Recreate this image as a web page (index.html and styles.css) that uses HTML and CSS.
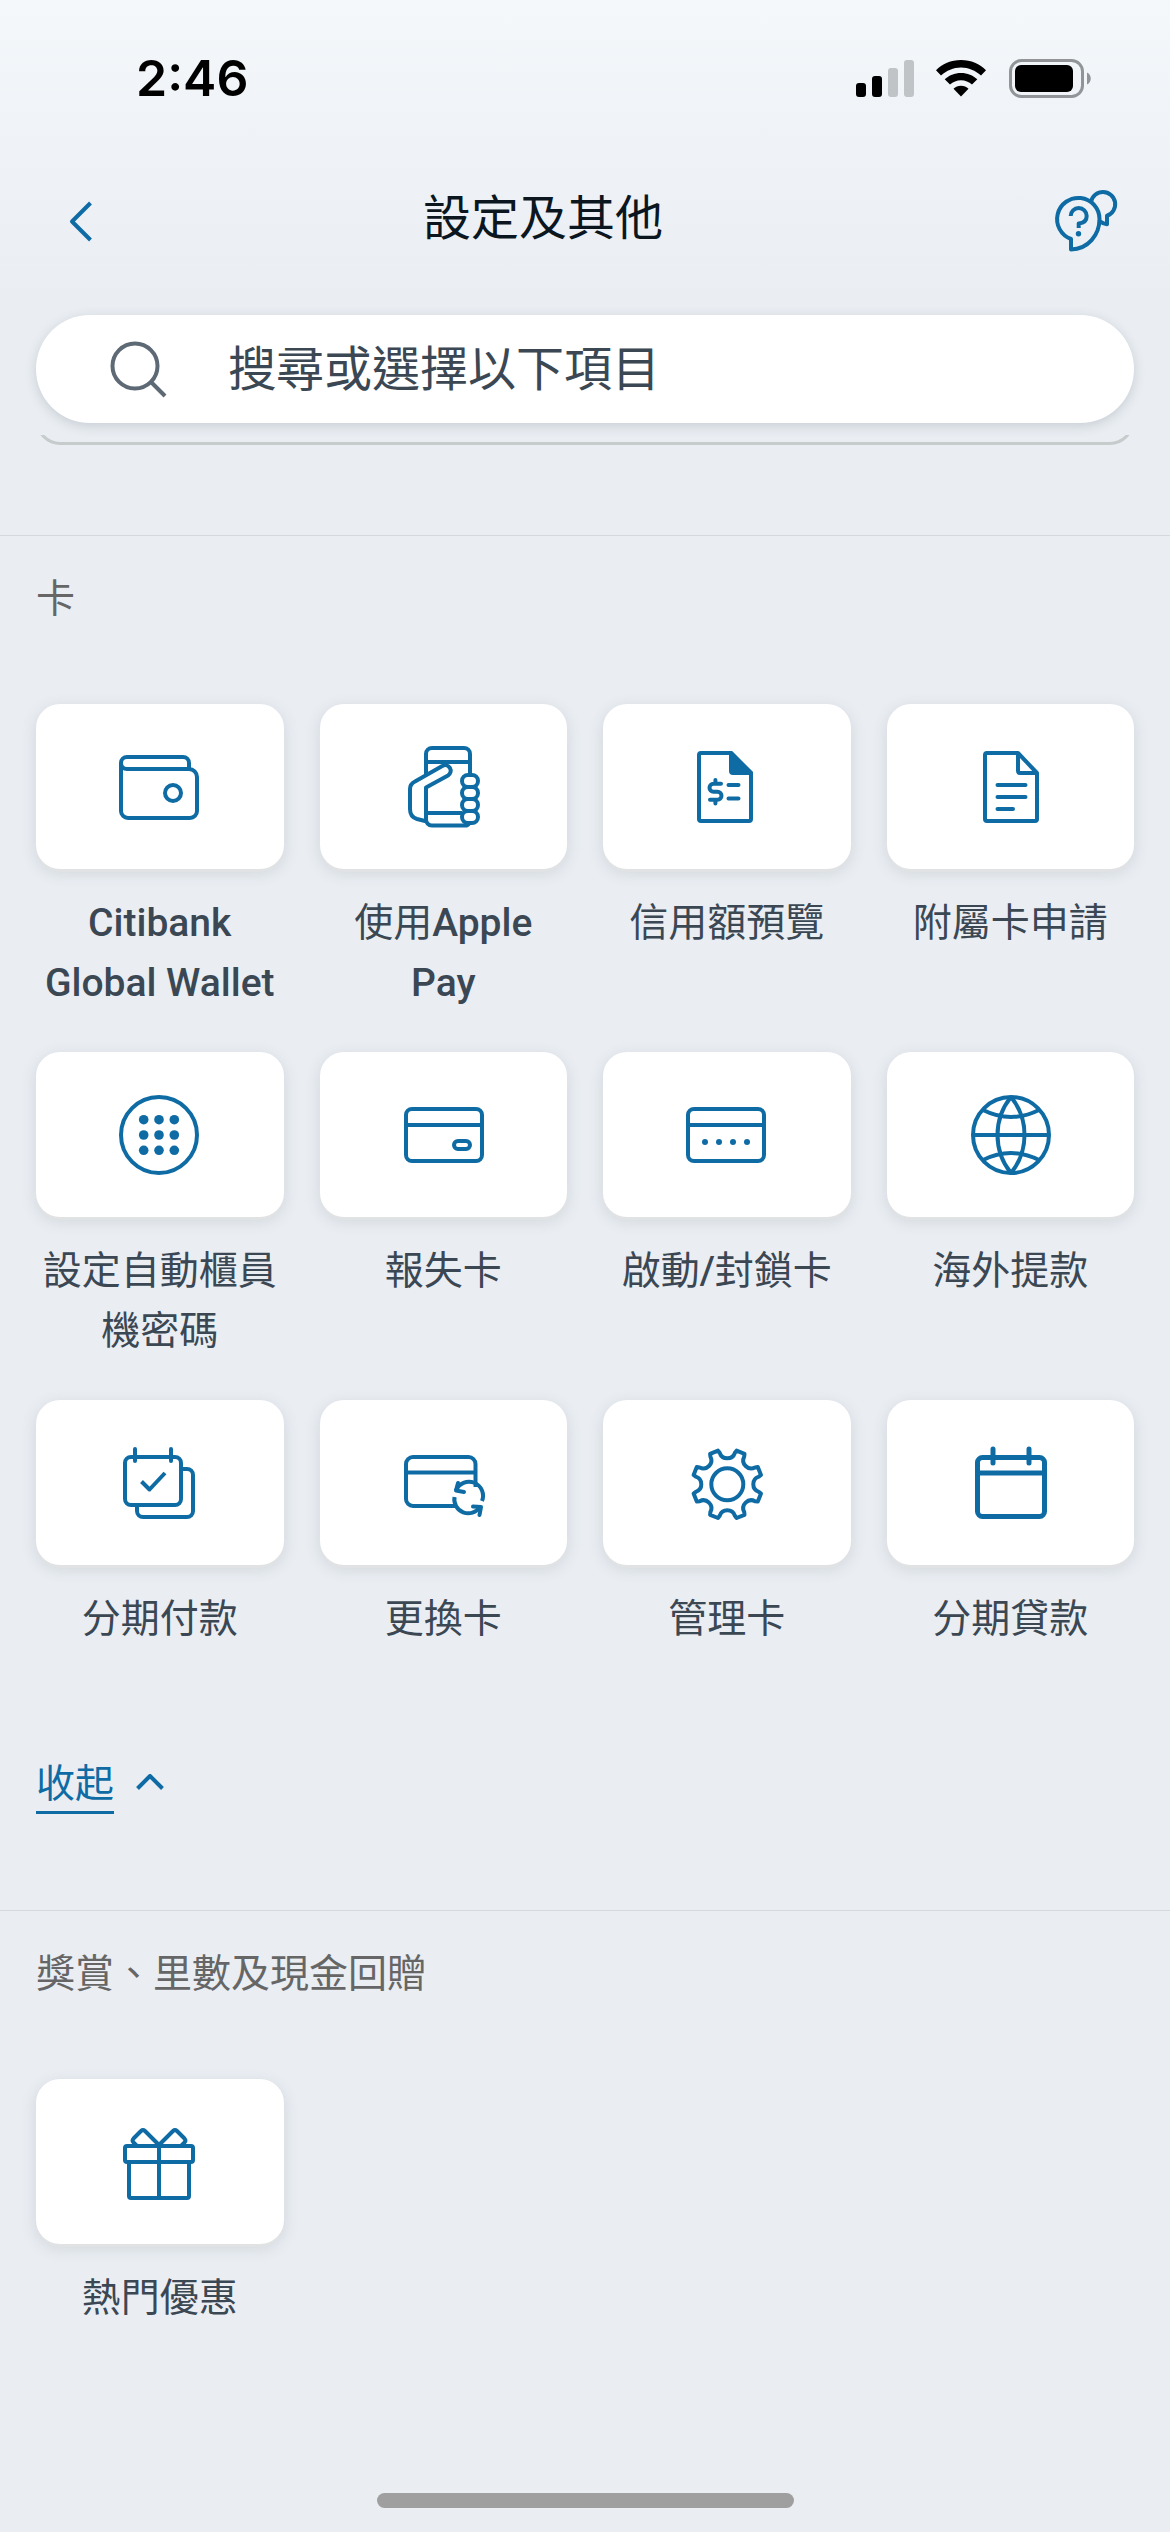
FILE: index.html
```html
<!DOCTYPE html>
<html lang="zh-Hant-HK">
<head>
<meta charset="utf-8">
<meta name="viewport" content="width=device-width, initial-scale=1">
<title>設定及其他</title>
<link rel="stylesheet" href="styles.css">
</head>
<body>
<div class="screen">
  <div class="status">
    <span class="clock">2:46</span>
    <div class="indicators">
      <svg width="58" height="40" viewBox="0 0 58 40" aria-hidden="true">
        <rect x="0" y="25" width="10" height="14" rx="3"/>
        <rect x="16" y="18" width="10" height="21" rx="3"/>
        <rect class="dim" x="32" y="10" width="10" height="29" rx="3"/>
        <rect class="dim" x="48" y="2" width="10" height="37" rx="3"/>
      </svg>
      <svg width="52" height="40" viewBox="0 0 52 40" aria-hidden="true">
        <path d="M26 2C16 2 7 6 1 12.300L6 17.500C11.500 12.500 18.500 9.500 26 9.500S40.500 12.500 46 17.500L51 12.300C45 6 36 2 26 2z"/>
        <path d="M26 15C19.500 15 14 17.300 9.700 21.300L15 26.500C18 24 21.800 22.300 26 22.300S34 24 37 26.500L42.300 21.300C38 17.300 32.500 15 26 15z"/>
        <path d="M26 27.700C23 27.700 20.500 28.800 18.500 30.700L26 38.500 33.500 30.700C31.500 28.800 29 27.700 26 27.700z"/>
      </svg>
      <svg width="84" height="40" viewBox="0 0 84 40" aria-hidden="true">
        <rect class="shell" x="2.500" y="2.500" width="72" height="36" rx="11"/>
        <rect x="7" y="7" width="58" height="27" rx="6"/>
        <path class="nub" d="M79 14.500c5 2 5 10 0 12z"/>
      </svg>
    </div>
  </div>

  <header class="topbar">
    <button class="icon-btn" type="button" aria-label="返回">
      <svg class="line" width="96" height="72" viewBox="0 0 96 72" aria-hidden="true"><path d="M54.500 18 36 36.500 54.500 55"/></svg>
    </button>
    <h1 class="title">設定及其他</h1>
    <button class="icon-btn help" type="button" aria-label="說明">
      <svg class="line" width="84" height="72" viewBox="0 0 84 72" aria-hidden="true">
        <path d="M21 54V64.500C38 64 49.500 50 49.500 34A21.200 21.200 0 1 0 21 54z"/>
        <path d="M41 17A12.200 12.200 0 1 1 57 30.700V39.300C54.500 39 52.300 38 50 36.500"/>
        <path d="M20.700 31a8 8 0 1 1 16 0c0 4.500-3 7-8 7.500V43"/>
        <circle class="dot" cx="28.500" cy="48.700" r="2.700"/>
      </svg>
    </button>
  </header>

  <form class="search" role="search">
    <label class="search-box">
      <svg class="glass" width="60" height="60" viewBox="0 0 60 60" aria-hidden="true"><circle cx="27" cy="27" r="22.500"/><path d="M43 43 57 57"/></svg>
      <input type="search" aria-label="搜尋或選擇以下項目" placeholder="搜尋或選擇以下項目">
    </label>
    <div class="search-edge"></div>
  </form>

  <main>
    <section class="group">
      <h2>卡</h2>
      <ul class="grid">
        <li><a class="item" href="#wallet"><span class="tile"><svg class="line" viewBox="0 0 96 96" aria-hidden="true"><path d="M15 30a6 6 0 0 1 0-12H71a6 6 0 0 1 6 6v6M9 24V72a7 7 0 0 0 7 7H78a7 7 0 0 0 7-7V38a8 8 0 0 0-8-8H15"/><circle cx="61" cy="54" r="8"/></svg></span><span><span class="latin">Citibank Global Wallet</span></span></a></li>
        <li><a class="item" href="#apple-pay"><span class="tile"><svg class="line" viewBox="0 0 96 96" aria-hidden="true"><path d="M31 36V15a6 6 0 0 1 6-6H69a6 6 0 0 1 6 6V36M31 23H75M31 74H67M31 80a6 6 0 0 0 6 6.500H70q3 0 4-2"/><path d="M31 83V48.500L53 36.500A5.500 5.500 0 0 0 47.300 27L20 42.500Q15 45 15 50V70Q15 78 22 80L32 82.500"/><rect x="67" y="36" width="16" height="12" rx="6"/><rect x="67" y="48" width="16" height="12" rx="6"/><rect x="67" y="60" width="16" height="12" rx="6"/><rect x="67" y="72" width="16" height="12" rx="6"/></svg></span><span>使用<span class="latin">Apple Pay</span></span></a></li>
        <li><a class="item" href="#limit"><span class="tile"><svg class="line" viewBox="0 0 96 96" aria-hidden="true"><path d="M52 14H22a2 2 0 0 0-2 2V80a2 2 0 0 0 2 2H70a2 2 0 0 0 2-2V34z"/><path class="solid" d="M52 14V32a2 2 0 0 0 2 2H72z"/><path class="round" d="M42 44.700H34.500a4 4 0 0 0 0 8H38.500a4 4 0 0 1 0 8H31M36.400 41v3.500M36.400 61v3.500M49.500 46H59.500M49.500 59.500H59.500"/></svg></span><span>信用額預覽</span></a></li>
        <li><a class="item" href="#supplementary"><span class="tile"><svg class="line" viewBox="0 0 96 96" aria-hidden="true"><path d="M56 14H25a2 2 0 0 0-2 2V80a2 2 0 0 0 2 2H73a2 2 0 0 0 2-2V34z"/><path d="M56 14V32a2 2 0 0 0 2 2H75"/><path class="round" d="M35.500 46H63.500M35.500 58H63.500M35.500 70H51"/></svg></span><span>附屬卡申請</span></a></li>
        <li><a class="item" href="#atm-pin"><span class="tile"><svg class="line" viewBox="0 0 96 96" aria-hidden="true"><circle cx="47" cy="48" r="38"/><g class="dot"><circle cx="31.700" cy="32.700" r="4.800"/><circle cx="47" cy="32.700" r="4.800"/><circle cx="62.300" cy="32.700" r="4.800"/><circle cx="31.700" cy="48" r="4.800"/><circle cx="47" cy="48" r="4.800"/><circle cx="62.300" cy="48" r="4.800"/><circle cx="31.700" cy="63.300" r="4.800"/><circle cx="47" cy="63.300" r="4.800"/><circle cx="62.300" cy="63.300" r="4.800"/></g></svg></span><span>設定自動櫃員機密碼</span></a></li>
        <li><a class="item" href="#lost-card"><span class="tile"><svg class="line" viewBox="0 0 96 96" aria-hidden="true"><rect x="11" y="22" width="76" height="52" rx="6"/><path d="M11 38H87"/><rect x="59" y="54" width="16" height="8" rx="4"/></svg></span><span>報失卡</span></a></li>
        <li><a class="item" href="#lock-card"><span class="tile"><svg class="line" viewBox="0 0 96 96" aria-hidden="true"><rect x="9" y="22" width="76" height="52" rx="6"/><path d="M9 38H85"/><g class="dot"><circle cx="26" cy="55" r="3"/><circle cx="40" cy="55" r="3"/><circle cx="54" cy="55" r="3"/><circle cx="68" cy="55" r="3"/></g></svg></span><span>啟動<span class="latin">/</span>封鎖卡</span></a></li>
        <li><a class="item" href="#overseas"><span class="tile"><svg class="line" viewBox="0 0 96 96" aria-hidden="true"><circle cx="49" cy="48" r="38"/><path d="M11 48H87M49 10C31 32 31 64 49 86C67 64 67 32 49 10M21 23Q49 37 77 23M21 73Q49 59 77 73"/></svg></span><span>海外提款</span></a></li>
        <li><a class="item" href="#instalment"><span class="tile"><svg class="line" viewBox="0 0 96 96" aria-hidden="true"><rect x="13" y="22" width="56" height="48" rx="6"/><path d="M69 34h6a6 6 0 0 1 6 6V76a6 6 0 0 1-6 6H31a6 6 0 0 1-6-6V70"/><path d="M29.500 46.500 37.500 54.500 53 38"/><path class="round" d="M23 14V26M59 14V26"/></svg></span><span>分期付款</span></a></li>
        <li><a class="item" href="#replace"><span class="tile"><svg class="line" viewBox="0 0 96 96" aria-hidden="true"><path d="M80.500 52V29a7 7 0 0 0-7-7H18a7 7 0 0 0-7 7V64a7 7 0 0 0 7 7H61M11 37.500H80"/><path d="M61 55.500A14 14 0 0 1 87 66M59.500 62A14 14 0 0 0 85 72"/><path class="round" d="M63 48 61 55.500 69 57M78 71.500 86 72 84.500 80"/></svg></span><span>更換卡</span></a></li>
        <li><a class="item" href="#manage"><span class="tile"><svg class="line" viewBox="0 0 96 96" aria-hidden="true"><circle cx="48.300" cy="49.300" r="16"/><path transform="translate(48.300 49.300)" d="M-7.600-31.500A8 8 0 0 0 7.600-31.500L9.300-33.700 17.200-30.500 16.900-27.700A8 8 0 0 0 27.700-16.900L30.500-17.200 33.700-9.300 31.500-7.600A8 8 0 0 0 31.500 7.600L33.700 9.300 30.500 17.200 27.700 16.900A8 8 0 0 0 16.900 27.700L17.200 30.500 9.300 33.700 7.600 31.500A8 8 0 0 0-7.600 31.500L-9.300 33.700-17.200 30.500-16.900 27.700A8 8 0 0 0-27.700 16.900L-30.500 17.200-33.700 9.300-31.500 7.600A8 8 0 0 0-31.500-7.600L-33.700-9.300-30.500-17.200-27.700-16.900A8 8 0 0 0-16.900-27.700L-17.200-30.500-9.300-33.700Z"/></svg></span><span>管理卡</span></a></li>
        <li><a class="item" href="#loan"><span class="tile"><svg class="line bold" viewBox="0 0 96 96" aria-hidden="true"><rect x="15.500" y="22.500" width="67" height="59" rx="5"/><path d="M15 38H83"/><path class="round" d="M31 14V28M67 14V28"/></svg></span><span>分期貸款</span></a></li>
      </ul>
      <button class="fold" type="button" aria-expanded="true">
        <span>收起</span>
        <svg class="line" width="32" height="24" viewBox="0 0 32 24" aria-hidden="true"><path d="M3.500 14.500 16 2 28.500 14.500"/></svg>
      </button>
    </section>

    <section class="group">
      <h2>獎賞、里數及現金回贈</h2>
      <ul class="grid">
        <li><a class="item" href="#offers"><span class="tile"><svg class="line" viewBox="0 0 96 96" aria-hidden="true"><rect x="13" y="32" width="68" height="16" rx="2"/><path d="M17 48V82a2 2 0 0 0 2 2H75a2 2 0 0 0 2-2V48M47 32V84M47 31 33 17a3 3 0 0 0-4 0L21.500 24.500a3 3 0 0 0 0 4L25 32M47 31 61 17a3 3 0 0 1 4 0L72.500 24.500a3 3 0 0 1 0 4L69 32"/></svg></span><span>熱門優惠</span></a></li>
      </ul>
    </section>
  </main>

  <div class="home"></div>
</div>
</body>
</html>
```
FILE: styles.css
```css
* {
  box-sizing: border-box;
}

body {
  margin: 0;
  background: #eaeef3;
  color: #3b4854;
  font-family: Roboto, "Noto Sans CJK TC", sans-serif;
  font-size: 39px;
  line-height: 60px;
}

.screen {
  display: flex;
  flex-direction: column;
  min-height: 100vh;
  background: linear-gradient(#f4f8fb, #eaeef3 300px);
}

button {
  padding: 0;
  border: 0;
  background: none;
  color: inherit;
  font: inherit;
  cursor: pointer;
}

svg {
  display: block;
}

.line {
  fill: none;
  stroke: #0f6ba4;
  stroke-width: 4;
  stroke-linejoin: round;
}

.bold {
  stroke-width: 5;
}

.round {
  stroke-linecap: round;
}

.dot {
  fill: #0f6ba4;
  stroke: none;
}

.solid {
  fill: #0f6ba4;
}

/* Status bar */
.status {
  display: flex;
  align-items: center;
  justify-content: space-between;
  height: 156px;
  padding: 0 78px 0 136px;
  color: #000;
}

.clock {
  font-family: Inter, sans-serif;
  font-size: 50px;
  font-weight: 600;
}

.indicators {
  display: flex;
  gap: 21px;
}

.dim {
  fill: #c0c4c7;
}

.shell {
  fill: none;
  stroke: #929497;
  stroke-width: 3;
}

.nub {
  fill: #929497;
}

/* Title bar */
.topbar {
  display: grid;
  grid-template-columns: 96px 1fr 180px;
  align-items: center;
  height: 129px;
  padding: 0 36px;
}

.help {
  justify-self: end;
}

.title {
  margin: 0;
  padding-bottom: 4px;
  color: #0b161e;
  font-size: 48px;
  font-weight: 400;
  text-align: center;
}

/* Search */
.search {
  padding: 30px 36px 0;
}

.search-box {
  display: flex;
  align-items: center;
  gap: 60px;
  height: 108px;
  padding: 0 72px;
  border-radius: 54px;
  background: #fff;
  box-shadow: 0 3px 12px rgba(60, 75, 85, 0.2);
}

.glass {
  flex: none;
  fill: none;
  stroke: #5d6975;
  stroke-width: 4;
}

.search-box input {
  flex: 1;
  min-width: 0;
  height: 72px;
  padding: 0;
  border: 0;
  outline: 0;
  background: none;
  color: #3b4854;
  font: inherit;
  font-size: 48px;
}

.search-box input::placeholder {
  color: #3b4854;
  opacity: 1;
}

.search-edge {
  display: flex;
  align-items: flex-end;
  height: 10px;
  margin-top: 12px;
  overflow: hidden;
}

.search-edge::before {
  content: "";
  flex: 1;
  height: 60px;
  border: 3px solid #c6cbcb;
  border-radius: 24px;
}

/* Groups */
main {
  flex: 1;
  padding-top: 90px;
}

.group {
  padding: 33px 36px 96px;
  border-top: 1px solid #d5d9de;
}

.group h2 {
  margin: 0 0 75px;
  color: #666;
  font-size: 39px;
  font-weight: 400;
}

.grid {
  display: grid;
  grid-template-columns: repeat(4, 1fr);
  gap: 39px 36px;
  margin: 0;
  padding: 0;
  list-style: none;
}

.item {
  display: flex;
  flex-direction: column;
  gap: 24px;
  color: inherit;
  text-align: center;
  text-decoration: none;
}

.tile {
  display: flex;
  align-items: center;
  justify-content: center;
  height: 165px;
  border-radius: 24px;
  background: #fff;
  box-shadow: 0 3px 0 #e0e2e4, 0 4px 15px rgba(60, 75, 85, 0.15);
}

.tile svg {
  width: 96px;
  height: 96px;
}

.latin {
  font-weight: 500;
}

.fold {
  display: flex;
  align-items: center;
  gap: 20px;
  margin-top: 108px;
  color: #0f6ba4;
  line-height: 54px;
}

.fold span {
  border-bottom: 3px solid #0f6ba4;
}

.home {
  align-self: center;
  width: 417px;
  max-width: 60%;
  height: 15px;
  margin: 24px 0;
  border-radius: 8px;
  background: #9f9f9f;
}
```
